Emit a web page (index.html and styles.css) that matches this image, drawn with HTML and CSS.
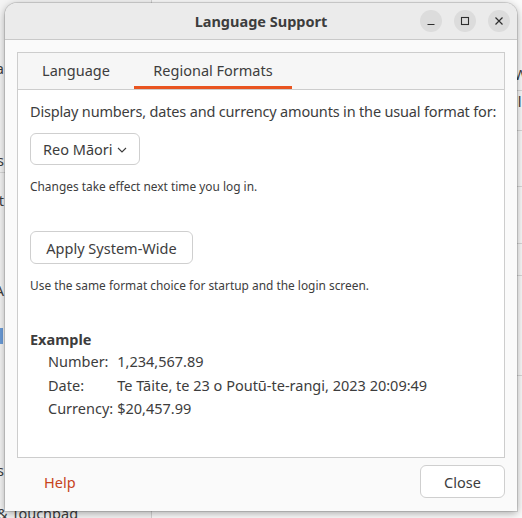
FILE: index.html
```html
<!DOCTYPE html>
<html lang="mi">
<head>
<meta charset="utf-8">
<title>Language Support</title>
<link rel="stylesheet" href="styles.css">
</head>
<body>
<div class="desktop">
  <div class="bgwin">
    <div class="bg-sidebar">
      <div class="bg-item" style="top:58px">Da</div>
      <div class="bg-item" style="top:150px">Ts</div>
      <div class="bg-sep" style="top:172px"></div>
      <div class="bg-item" style="top:190px">Out</div>
      <div class="bg-item" style="top:280px">A</div>
      <div class="bg-sel" style="top:328px"></div>
      <div class="bg-item" style="top:460px">Ts</div>
      <div class="bg-item touch" style="top:503px">&amp; Touchpad</div>
    </div>
    <div class="bg-main">
      <div class="bg-row" style="top:90px"></div>
      <div class="bg-row" style="top:130px"></div>
      <div class="bg-row" style="top:186px"></div>
      <div class="bg-row" style="top:243px"></div>
      <div class="bg-row" style="top:275px"></div>
      <div class="bg-row" style="top:375px"></div>
      <div class="bg-text" style="top:64px">W</div>
      <div class="bg-text" style="top:91px">ll</div>
    </div>
  </div>

  <div class="dialog">
    <header class="titlebar">
      <span class="title">Language Support</span>
      <div class="controls">
        <span class="wbtn"><svg width="10" height="10" viewBox="0 0 10 10"><path d="M1.5 8.5h7" stroke="#2e2e2e" stroke-width="1.2" fill="none"/></svg></span>
        <span class="wbtn"><svg width="10" height="10" viewBox="0 0 10 10"><rect x="1.5" y="1.5" width="7" height="7" stroke="#2e2e2e" stroke-width="1.1" fill="none"/></svg></span>
        <span class="wbtn"><svg width="10" height="10" viewBox="0 0 10 10"><path d="M1.5 1.5l7 7M8.5 1.5l-7 7" stroke="#2e2e2e" stroke-width="1.2" fill="none"/></svg></span>
      </div>
    </header>
    <div class="dialog-body">
      <div class="notebook">
        <div class="tabs">
          <div class="tab tab-first">Language</div>
          <div class="tab active">Regional Formats</div>
        </div>
        <div class="page">
          <p class="lead">Display numbers, dates and currency amounts in the usual format for:</p>
          <div class="combo">Reo Māori <svg class="chev" width="10" height="6" viewBox="0 0 10 6"><path d="M1 1l4 4 4-4" stroke="#3d3d3d" stroke-width="1.1" fill="none"/></svg></div>
          <p class="note">Changes take effect next time you log in.</p>
          <div class="button apply">Apply System-Wide</div>
          <p class="note">Use the same format choice for startup and the login screen.</p>
          <h3 class="example-title">Example</h3>
          <div class="example">
            <span>Number:</span><span>1,234,567.89</span>
            <span>Date:</span><span>Te Tāite, te 23 o Poutū-te-rangi, 2023 20:09:49</span>
            <span>Currency:</span><span>$20,457.99</span>
          </div>
        </div>
      </div>
      <div class="actions">
        <span class="help">Help</span>
        <div class="button close">Close</div>
      </div>
    </div>
  </div>
</div>
</body>
</html>
```

FILE: styles.css
```css
* { box-sizing: border-box; margin: 0; padding: 0; }
html, body { width: 522px; height: 518px; overflow: hidden; }
body {
  font-family: "Noto Sans", "Open Sans", sans-serif;
  color: #3d3d3d;
  background: #f0f0f0;
}
.desktop { position: relative; width: 522px; height: 518px; }

/* background settings window */
.bgwin { position: absolute; inset: 0; display: flex; }
.bg-sidebar { position: relative; width: 152px; background: #f4f4f4; border-right: 1px solid #d4d4d4; }
.bg-main { position: relative; flex: 1; background: #fafafa; }
.bg-item { position: absolute; right: 147px; font-size: 14.5px; color: #3d3d3d; white-space: nowrap; }
.bg-item.touch { left: -3px; right: auto; }
.bg-sep { position: absolute; left: 0; width: 152px; height: 1px; background: #d8d8d8; }
.bg-sel { position: absolute; left: 0; width: 3px; height: 16px; background: #6a9bd8; }
.bg-row { position: absolute; left: 0; right: 0; height: 1px; background: #d8d8d8; }
.bg-text { position: absolute; left: 362px; font-size: 14.5px; color: #3d3d3d; }

/* dialog */
.dialog {
  position: absolute; left: 5px; top: 3px; width: 512px; height: 508px;
  background: #fafafa;
  border-radius: 12px 12px 0 0;
  box-shadow: 0 0 0 1px rgba(0,0,0,0.12), 0 2px 8px rgba(0,0,0,0.35);
  display: flex; flex-direction: column;
  overflow: hidden;
}
.titlebar {
  height: 37px; flex: none;
  background: #ebebeb;
  border-bottom: 1px solid #c9c9c9;
  display: flex; align-items: center; justify-content: center;
  position: relative;
}
.title { font-weight: 700; font-size: 14.5px; color: #3d3d3d; }
.controls {
  position: absolute; right: 7px; top: 7px;
  display: flex; gap: 12px;
}
.wbtn {
  width: 22px; height: 22px; border-radius: 50%;
  background: #dcdcdc;
  display: flex; align-items: center; justify-content: center;
}
.dialog-body { flex: 1; display: flex; flex-direction: column; padding: 12px; }

.notebook {
  height: 406px; flex: none;
  border: 1px solid #cdcdcd;
  display: flex; flex-direction: column;
  background: #fff;
}
.tabs {
  height: 37px; flex: none;
  background: #f6f6f6;
  border-bottom: 1px solid #cdcdcd;
  display: flex;
}
.tab {
  font-size: 14.5px; display: flex; align-items: center; justify-content: center;
  padding-bottom: 3px;
}
.tab-first { width: 116px; }
.tab.active { width: 158px; box-shadow: inset 0 -3px 0 #e95420; }

.page { flex: 1; padding: 11px 0 0 12px; display: flex; flex-direction: column; align-items: flex-start; }
.lead { font-size: 14.5px; line-height: 20px; white-space: nowrap; letter-spacing: -0.17px; }
.combo {
  margin-top: 12px;
  height: 32px; padding: 0 12px 0 12px;
  border: 1px solid #cfcfcf; border-radius: 6px;
  font-size: 14.5px; display: flex; align-items: center; gap: 4px;
  background: #fff;
}
.chev { margin-top: 1px; }
.note { font-size: 11.9px; line-height: 17px; margin-top: 13px; }
.button {
  height: 33px; border: 1px solid #cfcfcf; border-radius: 6px;
  font-size: 14.5px; display: flex; align-items: center; justify-content: center;
  background: #fff;
}
.apply { margin-top: 36px; width: 163px; }
.example-title { font-size: 14.5px; font-weight: 700; line-height: 20px; margin-top: 35px; }
.example {
  margin-top: 2px; margin-left: 18px;
  display: grid; grid-template-columns: auto auto; column-gap: 4px; row-gap: 3.5px;
  font-size: 14.5px; line-height: 20px;
}

.actions { flex: 1; display: flex; align-items: center; justify-content: space-between; padding: 6px 0 0 27px; }
.help { font-size: 14.5px; color: #c7431c; }
.close { width: 85px; }
```
